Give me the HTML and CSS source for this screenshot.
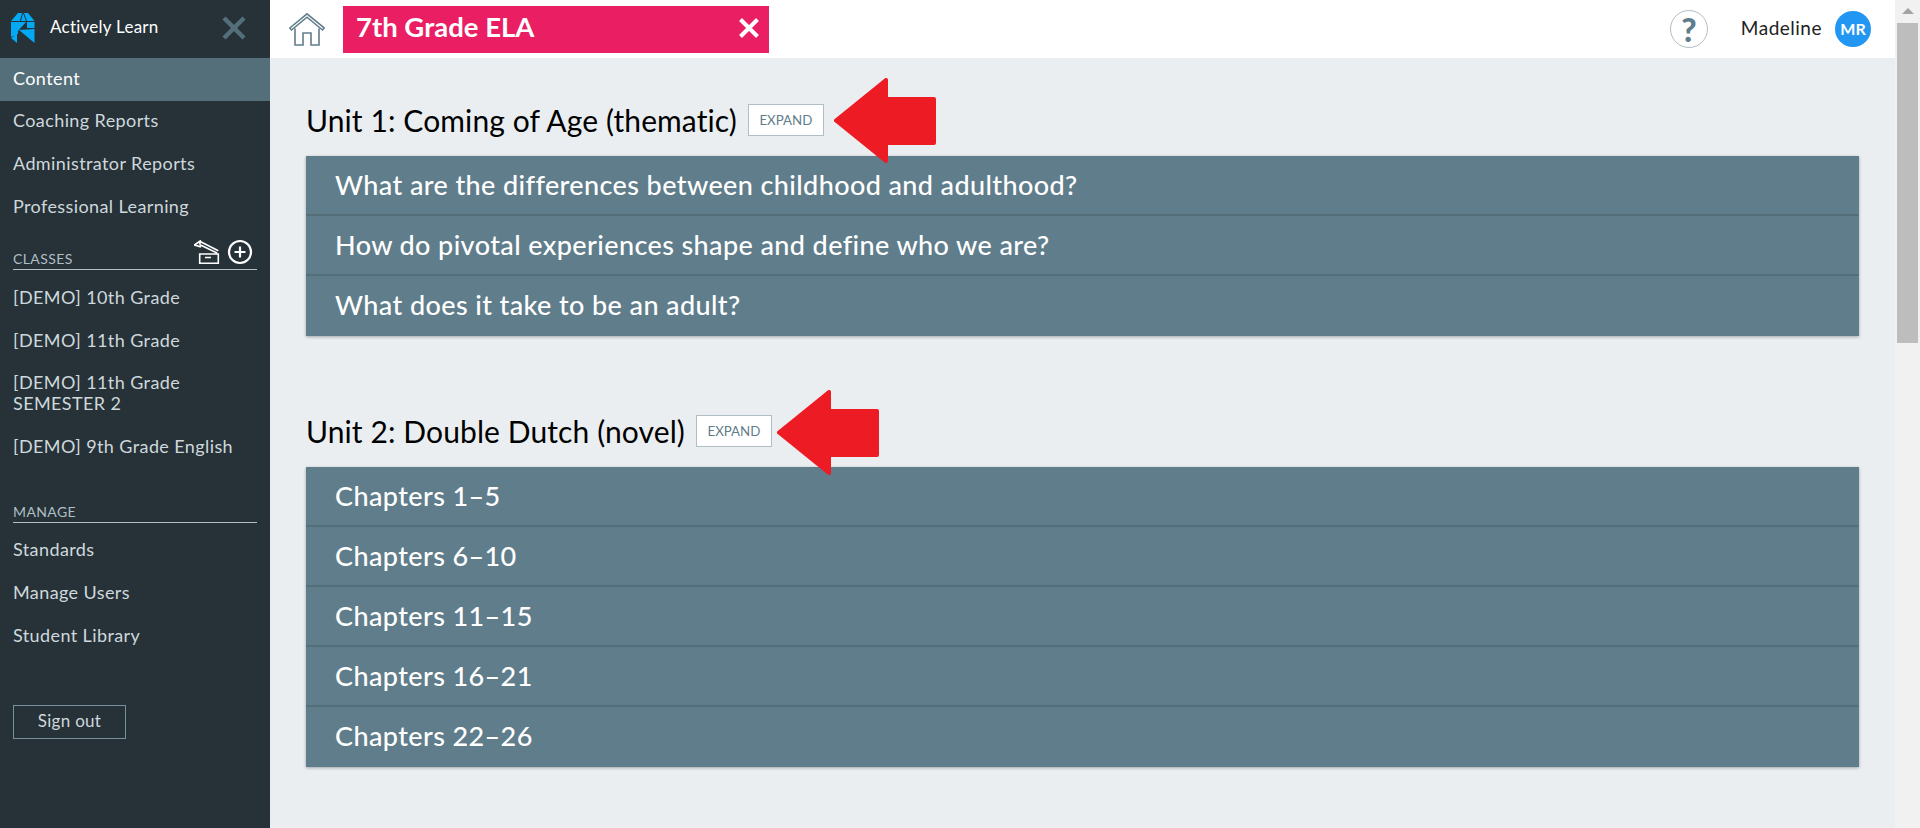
FILE: index.html
```html
<!DOCTYPE html>
<html lang="en">
<head>
<meta charset="UTF-8">
<title>7th Grade ELA</title>
<link rel="stylesheet" href="styles.css">
</head>
<body>

<div class="app">
    <nav class="sidebar">
        <div class="brand">
            <svg class="brand-logo" viewBox="0 0 24 30" width="24" height="30">
                <path fill="#03a9f4" d="M7 0H11L9 8H0ZM12 0 15 8H10ZM13 0H17L23.500 8H16ZM0 9H15L7 18V21L0 24ZM16 9H23.500V15H16ZM0 25 6 21V30ZM8 17 23.500 16V30Z"/>
            </svg>
            <span class="brand-name">Actively Learn</span>
            <svg class="brand-close" viewBox="0 0 24 24" width="24" height="24">
                <path d="M2 2 22 22M22 2 2 22" stroke="#546e7a" stroke-width="4.5" fill="none"/>
            </svg>
        </div>

        <a class="nav-item active">Content</a>
        <a class="nav-item">Coaching Reports</a>
        <a class="nav-item">Administrator Reports</a>
        <a class="nav-item">Professional Learning</a>

        <div class="nav-heading classes">
            <span>CLASSES</span>
            <div class="heading-icons">
                <svg viewBox="0 0 26 26" width="26" height="26">
                    <path d="M5.700 15H24.300V24.300H5.700ZM11 18.500H17M5.500 5.500 23 14M6.700 2.700 24.300 11.700M6.700 2.700 5.500 5.500M7 1.500 0.500 6 7 8" stroke="#fff" stroke-width="1.6" fill="none"/>
                </svg>
                <svg viewBox="0 0 26 26" width="26" height="26">
                    <circle cx="13" cy="13" r="11" stroke="#fff" stroke-width="2.200" fill="none"/>
                    <path d="M13 7.500V18.500M7.500 13H18.500" stroke="#fff" stroke-width="2.200" fill="none"/>
                </svg>
            </div>
        </div>
        <a class="nav-item">[DEMO] 10th Grade</a>
        <a class="nav-item">[DEMO] 11th Grade</a>
        <a class="nav-item two-line">[DEMO] 11th Grade<br>SEMESTER 2</a>
        <a class="nav-item">[DEMO] 9th Grade English</a>

        <div class="nav-heading manage"><span>MANAGE</span></div>
        <a class="nav-item">Standards</a>
        <a class="nav-item">Manage Users</a>
        <a class="nav-item">Student Library</a>

        <button class="sign-out">Sign out</button>
    </nav>

    <div class="page">
        <header class="topbar">
            <svg class="home-icon" viewBox="0 0 36 33" width="36" height="33">
                <path d="M0.800 15 18 0.800 35.200 15 33.500 17 18 4.200 2.500 17ZM6 15.500V32H14V20H22V32H30V15.500" stroke="#607d8b" stroke-width="1.600" fill="none"/>
            </svg>
            <div class="course-tab">
                <span>7th Grade ELA</span>
                <svg viewBox="0 0 20 20" width="20" height="20">
                    <path d="M1.500 1.500 18.500 18.500M18.500 1.500 1.500 18.500" stroke="#fff" stroke-width="4" fill="none"/>
                </svg>
            </div>
            <div class="help">?</div>
            <span class="user-name">Madeline</span>
            <div class="avatar">MR</div>
        </header>

        <main class="content">
            <section class="unit">
                <div class="unit-title">
                    <h2>Unit 1: Coming of Age (thematic)</h2>
                    <button class="expand">EXPAND</button>
                </div>
                <div class="unit-list">
                    <div class="unit-row">What are the differences between childhood and adulthood?</div>
                    <div class="unit-row">How do pivotal experiences shape and define who we are?</div>
                    <div class="unit-row">What does it take to be an adult?</div>
                </div>
            </section>

            <section class="unit">
                <div class="unit-title">
                    <h2>Unit 2: Double Dutch (novel)</h2>
                    <button class="expand">EXPAND</button>
                </div>
                <div class="unit-list">
                    <div class="unit-row">Chapters 1–5</div>
                    <div class="unit-row">Chapters 6–10</div>
                    <div class="unit-row">Chapters 11–15</div>
                    <div class="unit-row">Chapters 16–21</div>
                    <div class="unit-row">Chapters 22–26</div>
                </div>
            </section>
        </main>
    </div>

    <div class="scrollbar">
        <div class="scroll-up"></div>
        <div class="scroll-thumb"></div>
    </div>
</div>

<!-- red arrows drawn over the screenshot -->
<svg class="arrow arrow-one" viewBox="0 0 102 85" width="102" height="85">
    <path fill="#ed1c24" stroke="#ed1c24" stroke-width="4" stroke-linejoin="round" d="M2 42.500 52 2V21H100V65H52V83Z"/>
</svg>
<svg class="arrow arrow-two" viewBox="0 0 102 85" width="102" height="85">
    <path fill="#ed1c24" stroke="#ed1c24" stroke-width="4" stroke-linejoin="round" d="M2 42.500 52 2V21H100V65H52V83Z"/>
</svg>

</body>
</html>
```

FILE: styles.css
```css
* { margin: 0; padding: 0; box-sizing: border-box; }
body { overflow: hidden; font-family: Lato, "Open Sans", sans-serif; }

.app {
    display: flex;
    height: 828px;
}

.sidebar {
    width: 270px;
    flex-shrink: 0;
    background: #263238;
    color: #cfd8dc;
    display: flex;
    flex-direction: column;
}

.brand {
    height: 58px;
    flex-shrink: 0;
    display: flex;
    align-items: center;
    padding: 0 24px 2px 11px;
    color: #fff;
}

.brand-name {
    margin: 0 0 4px 15px;
    font-size: 17px;
    letter-spacing: 0.25px;
    flex: 1;
}

.nav-item {
    display: block;
    height: 43px;
    line-height: 38px;
    padding-left: 13px;
    font-size: 18px;
    letter-spacing: 0.4px;
}

.nav-item.active {
    background: #546e7a;
    color: #fff;
    line-height: 40px;
}

.nav-item.two-line {
    height: 63px;
    line-height: 21px;
    padding-top: 8px;
}

.nav-heading {
    margin: 0 13px;
    display: flex;
    justify-content: space-between;
    align-items: flex-end;
    border-bottom: 1px solid #b0bec5;
    font-size: 14px;
    letter-spacing: 0.4px;
    color: #b0bec5;
    padding-bottom: 2px;
}

.nav-heading.classes { height: 33px; margin-top: 7px; margin-bottom: 8px; }
.nav-heading.manage { height: 20px; margin-top: 33px; margin-bottom: 7px; }

.heading-icons {
    display: flex;
    gap: 7px;
    margin-right: 4px;
    margin-bottom: 2px;
    align-items: flex-end;
}

.sign-out {
    margin: 46px 0 0 13px;
    width: 113px;
    height: 34px;
    background: none;
    border: 1px solid #78909c;
    color: #cfd8dc;
    font: 17px Lato, sans-serif;
    letter-spacing: 0.3px;
    padding-bottom: 4px;
}

.page {
    flex: 1;
    display: flex;
    flex-direction: column;
    background: #eaeef1;
    min-width: 0;
}

.topbar {
    height: 58px;
    flex-shrink: 0;
    background: #fff;
    display: flex;
    align-items: center;
    padding-left: 19px;
}

.course-tab {
    width: 426px;
    height: 47px;
    margin-left: 18px;
    background: #e91e63;
    color: #fff;
    font-size: 27.500px;
    font-weight: 700;
    display: flex;
    align-items: center;
    justify-content: space-between;
    padding: 0 10px 3px 13px;
}

.course-tab span { margin-bottom: 2px; }

.help {
    width: 38px;
    height: 38px;
    margin-left: auto;
    border: 1px solid #b0bec5;
    border-radius: 50%;
    color: #607d8b;
    font-size: 33px;
    font-weight: 900;
    text-align: center;
    line-height: 36px;
}

.user-name {
    margin: 0 0 4px 33px;
    font-size: 19px;
    letter-spacing: 0.5px;
    color: #212121;
}

.avatar {
    width: 36px;
    height: 36px;
    margin: 0 24px 0 13px;
    border-radius: 50%;
    background: #2196f3;
    color: #fff;
    font-size: 16px;
    font-weight: 700;
    text-align: center;
    line-height: 36px;
}

.content {
    flex: 1;
    min-height: 0;
    overflow: hidden;
    padding: 40px 36px 0;
}

.unit { margin-bottom: 73px; }

.unit-title {
    display: flex;
    align-items: center;
    height: 44px;
    margin-bottom: 14px;
}

.unit-title h2 {
    font-size: 30px;
    letter-spacing: 0.1px;
    font-weight: 400;
    color: #000;
}

.expand {
    margin-left: 11px;
    width: 76px;
    height: 32px;
    background: #fff;
    border: 1px solid #b0bec5;
    color: #607d8b;
    font: 13.300px Lato, sans-serif;
}

.unit-list {
    background: #607d8b;
    box-shadow: 0 1px 3px rgba(0,0,0,0.3);
}

.unit-row {
    height: 60px;
    line-height: 58px;
    padding-left: 29px;
    font-size: 27px;
    letter-spacing: 0.39px;
    font-weight: 500;
    color: #fff;
    border-bottom: 2px solid #546e7a;
}

.unit-row:last-child { border-bottom: none; }

.scrollbar {
    width: 25px;
    flex-shrink: 0;
    background: #f1f1f1;
    padding: 0 2px;
}

.scroll-up {
    width: 0;
    height: 23px;
    margin: 0 auto;
    border-left: 6px solid transparent;
    border-right: 6px solid transparent;
    border-top: 8px solid transparent;
    border-bottom: 9px solid transparent;
    position: relative;
}

.scroll-up::after {
    content: "";
    position: absolute;
    left: -6px;
    top: 0;
    border-left: 6px solid transparent;
    border-right: 6px solid transparent;
    border-bottom: 6px solid #a3a3a3;
}

.scroll-thumb {
    height: 320px;
    background: #bdbdbd;
}

.arrow { position: absolute; }
.arrow-one { left: 834px; top: 78px; }
.arrow-two { left: 777px; top: 390px; }
```
